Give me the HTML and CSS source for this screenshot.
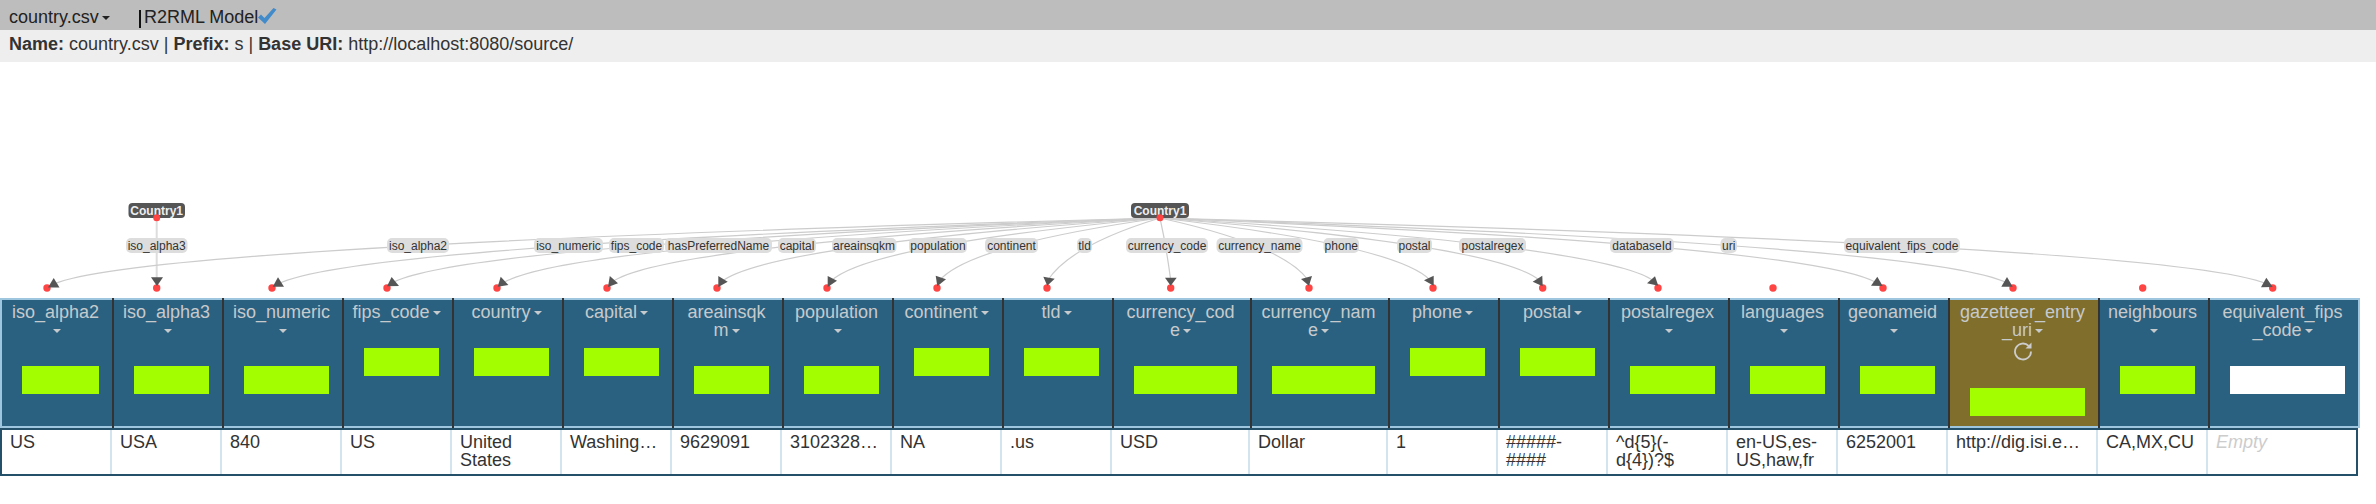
FILE: index.html
```html
<!DOCTYPE html>
<html lang="en">
<head>
  <meta charset="UTF-8" />
  <title>country.csv</title>
  <link rel="stylesheet" href="styles.css">
</head>
<body>

<div class="topbar">
  <span class="ws-name">country.csv<span class="caret"></span></span>
  <span class="model-sep"></span>
  <span class="model-name">R2RML Model</span>
  <svg class="check" width="19" height="16" viewBox="0 0 19 16"><path d="M0 9.5 L3 6.5 L6.5 10 L15.5 0 L18.5 1.5 L7 16 Z"/></svg>
</div>
<div class="infobar"><b>Name:</b> country.csv | <b>Prefix:</b> s | <b>Base URI:</b> http://localhost:8080/source/</div>

<!-- Graphe du modele, coordonnees = pixels de la page -->
<svg class="graph" width="2376" height="236" viewBox="0 62 2376 236">
  <line class="edge-main" x1="156.7" y1="218" x2="156.7" y2="280"/>
  <path class="edge" d="M1160 218 Q146 245 54 284"/>
  <path class="edge" d="M1160 218 Q355 245 278 284"/>
  <path class="edge" d="M1160 218 Q461 245 392 283"/>
  <path class="edge" d="M1160 218 Q564 245 503 283"/>
  <path class="edge" d="M1160 218 Q665 245 612 282"/>
  <path class="edge" d="M1160 218 Q767 245 721 282"/>
  <path class="edge" d="M1160 218 Q869 245 831 281"/>
  <path class="edge" d="M1160 218 Q969 245 939 281"/>
  <path class="edge" d="M1160 218 Q1071 245 1048 280"/>
  <path class="edge" d="M1160 218 Q1166 245 1170.7 280"/>
  <path class="edge" d="M1160 218 Q1283 245 1308 280"/>
  <path class="edge" d="M1160 218 Q1396 245 1430 280"/>
  <path class="edge" d="M1160 218 Q1497 245 1539 280"/>
  <path class="edge" d="M1160 218 Q1604 245 1654 281"/>
  <path class="edge" d="M1160 218 Q1812 245 1877 283"/>
  <path class="edge" d="M1160 218 Q1933 245 2007 283"/>
  <path class="edge" d="M1160 218 Q2175 245 2267 284"/>

  <g class="labels">
    <rect x="126" y="238" width="61.5" height="15" rx="5"/><text x="156.7" y="250">iso_alpha3</text>
    <rect x="387" y="238" width="62" height="15" rx="5"/><text x="418" y="250">iso_alpha2</text>
    <rect x="534" y="238" width="69" height="15" rx="5"/><text x="568.5" y="250">iso_numeric</text>
    <rect x="609" y="238" width="55" height="15" rx="5"/><text x="636.5" y="250">fips_code</text>
    <rect x="665" y="238" width="107" height="15" rx="5"/><text x="718.5" y="250">hasPreferredName</text>
    <rect x="778" y="238" width="38" height="15" rx="5"/><text x="797" y="250">capital</text>
    <rect x="832" y="238" width="64.5" height="15" rx="5"/><text x="864" y="250">areainsqkm</text>
    <rect x="909" y="238" width="58" height="15" rx="5"/><text x="938" y="250">population</text>
    <rect x="985" y="238" width="53" height="15" rx="5"/><text x="1011.5" y="250">continent</text>
    <rect x="1077" y="238" width="15" height="15" rx="5"/><text x="1084.5" y="250">tld</text>
    <rect x="1126" y="238" width="82" height="15" rx="5"/><text x="1167" y="250">currency_code</text>
    <rect x="1216.5" y="238" width="86" height="15" rx="5"/><text x="1259.5" y="250">currency_name</text>
    <rect x="1323.5" y="238" width="35.5" height="15" rx="5"/><text x="1341.3" y="250">phone</text>
    <rect x="1397" y="238" width="35" height="15" rx="5"/><text x="1414.5" y="250">postal</text>
    <rect x="1459" y="238" width="67" height="15" rx="5"/><text x="1492.5" y="250">postalregex</text>
    <rect x="1610" y="238" width="64" height="15" rx="5"/><text x="1642" y="250">databaseId</text>
    <rect x="1720.5" y="238" width="16.5" height="15" rx="5"/><text x="1728.7" y="250">uri</text>
    <rect x="1844" y="238" width="116" height="15" rx="5"/><text x="1902" y="250">equivalent_fips_code</text>
  </g>

  <g class="nodes">
    <rect x="128.5" y="203" width="56.5" height="15" rx="4"/><text x="156.7" y="215">Country1</text>
    <rect x="1131" y="203" width="58" height="15" rx="4"/><text x="1160" y="215">Country1</text>
  </g>

  <g class="dots">
    <circle cx="156.7" cy="217.7" r="3.5"/>
    <circle cx="1160" cy="217.7" r="3.5"/>
    <circle cx="47" cy="288" r="3.7"/>
    <circle cx="156.7" cy="288" r="3.7"/>
    <circle cx="272" cy="288" r="3.7"/>
    <circle cx="387" cy="288" r="3.7"/>
    <circle cx="497" cy="288" r="3.7"/>
    <circle cx="607" cy="288" r="3.7"/>
    <circle cx="717" cy="288" r="3.7"/>
    <circle cx="827" cy="288" r="3.7"/>
    <circle cx="937" cy="288" r="3.7"/>
    <circle cx="1047" cy="288" r="3.7"/>
    <circle cx="1170.7" cy="288" r="3.7"/>
    <circle cx="1309" cy="288" r="3.7"/>
    <circle cx="1433" cy="288" r="3.7"/>
    <circle cx="1542.7" cy="288" r="3.7"/>
    <circle cx="1658" cy="288" r="3.7"/>
    <circle cx="1773" cy="288" r="3.7"/>
    <circle cx="1883" cy="288" r="3.7"/>
    <circle cx="2013" cy="288" r="3.7"/>
    <circle cx="2142.7" cy="288" r="3.7"/>
    <circle cx="2272.7" cy="288" r="3.7"/>
  </g>

  <g class="arrows">
    <polygon points="53.7,278 48,287.5 59.5,287.5"/>
    <polygon points="151,277.3 163,277.3 157,286"/>
    <polygon points="278,277.3 272.7,286.7 284,286.7"/>
    <polygon points="391.6,277 387,286.3 399,286"/>
    <polygon points="500.7,276.7 508.4,285 497.7,286.7"/>
    <polygon points="609.8,276 618,283.3 608,287"/>
    <polygon points="718.3,276 727.7,281.7 718.3,287"/>
    <polygon points="827.7,276 837,280.7 827.7,287"/>
    <polygon points="935.7,275.7 946,279.3 937.3,286.3"/>
    <polygon points="1043.3,276.7 1054.7,278.7 1047.3,285.7"/>
    <polygon points="1165,277.7 1176.7,277.7 1170.7,285.7"/>
    <polygon points="1312,276 1309,285.7 1301,279"/>
    <polygon points="1433.7,275.7 1433.7,285.7 1424,280.3"/>
    <polygon points="1542.3,275.7 1542.7,286.3 1532.7,281.7"/>
    <polygon points="1655,276.3 1658.3,285.7 1647,283.3"/>
    <polygon points="1877.3,276.7 1882.7,286 1871,285.7"/>
    <polygon points="2007,277 2012.7,286.7 2001.3,286.7"/>
    <polygon points="2266.3,277.7 2272.7,287 2261,287.3"/>
  </g>
</svg>

<div class="head-row">
  <div class="col first"><div class="col-in"><div class="col-title">iso_alpha2<span class="caret"></span></div><div class="bar"></div></div></div>
  <div class="col"><div class="col-in"><div class="col-title">iso_alpha3<span class="caret"></span></div><div class="bar"></div></div></div>
  <div class="col"><div class="col-in"><div class="col-title">iso_numeric<span class="caret"></span></div><div class="bar"></div></div></div>
  <div class="col"><div class="col-in"><div class="col-title">fips_code<span class="caret"></span></div><div class="bar"></div></div></div>
  <div class="col"><div class="col-in"><div class="col-title">country<span class="caret"></span></div><div class="bar"></div></div></div>
  <div class="col"><div class="col-in"><div class="col-title">capital<span class="caret"></span></div><div class="bar"></div></div></div>
  <div class="col"><div class="col-in"><div class="col-title">areainsqk<br>m<span class="caret"></span></div><div class="bar"></div></div></div>
  <div class="col"><div class="col-in"><div class="col-title">population<span class="caret"></span></div><div class="bar"></div></div></div>
  <div class="col"><div class="col-in"><div class="col-title">continent<span class="caret"></span></div><div class="bar"></div></div></div>
  <div class="col"><div class="col-in"><div class="col-title">tld<span class="caret"></span></div><div class="bar"></div></div></div>
  <div class="col"><div class="col-in"><div class="col-title">currency_cod<br>e<span class="caret"></span></div><div class="bar"></div></div></div>
  <div class="col"><div class="col-in"><div class="col-title">currency_nam<br>e<span class="caret"></span></div><div class="bar"></div></div></div>
  <div class="col"><div class="col-in"><div class="col-title">phone<span class="caret"></span></div><div class="bar"></div></div></div>
  <div class="col"><div class="col-in"><div class="col-title">postal<span class="caret"></span></div><div class="bar"></div></div></div>
  <div class="col"><div class="col-in"><div class="col-title">postalregex<span class="caret"></span></div><div class="bar"></div></div></div>
  <div class="col"><div class="col-in"><div class="col-title">languages<span class="caret"></span></div><div class="bar"></div></div></div>
  <div class="col"><div class="col-in"><div class="col-title">geonameid<span class="caret"></span></div><div class="bar"></div></div></div>
  <div class="col selected"><div class="col-in">
    <div class="col-title">gazetteer_entry<br>_uri<span class="caret"></span></div>
    <svg class="refresh" width="19" height="22" viewBox="0 0 19 22"><path d="M14.66 6.84 A8 8 0 1 0 17 12.5"/><polygon points="17.5,3.5 17.5,9.5 11.5,9.5"/></svg>
    <div class="bar"></div>
  </div></div>
  <div class="col"><div class="col-in"><div class="col-title">neighbours<span class="caret"></span></div><div class="bar"></div></div></div>
  <div class="col last"><div class="col-in"><div class="col-title">equivalent_fips<br>_code<span class="caret"></span></div><div class="bar empty"></div></div></div>
</div>

<div class="value-row">
  <div class="val">US</div>
  <div class="val">USA</div>
  <div class="val">840</div>
  <div class="val">US</div>
  <div class="val">United States</div>
  <div class="val">Washing…</div>
  <div class="val">9629091</div>
  <div class="val">3102328…</div>
  <div class="val">NA</div>
  <div class="val">.us</div>
  <div class="val">USD</div>
  <div class="val">Dollar</div>
  <div class="val">1</div>
  <div class="val">#####-####</div>
  <div class="val">^d{5}(-<br>d{4})?$</div>
  <div class="val">en-US,es-US,haw,fr</div>
  <div class="val">6252001</div>
  <div class="val">http://dig.isi.e…</div>
  <div class="val">CA,MX,CU</div>
  <div class="val none">Empty</div>
</div>

</body>
</html>
```

FILE: styles.css
```css
body {
  font-family: "Liberation Sans", Arial, sans-serif;
  font-size: 18px;
  line-height: 18px;
  color: #333;
  background: #fff;
  margin: 0;
  padding: 0;
}

.topbar {
  display: flex;
  align-items: center;
  box-sizing: border-box;
  height: 30px;
  padding: 4px 0 0 9px;
  background: #bdbdbd;
  color: #222;
}

.ws-name {
  width: 130px;
}

.model-sep {
  width: 2px;
  height: 18px;
  margin-top: 3px;
  margin-right: 3px;
  background: #111;
}

.check {
  fill: #428bca;
  margin-top: -3px;
}

.infobar {
  height: 32px;
  line-height: 28px;
  padding-left: 9px;
  background: #eee;
}

.graph {
  display: block;
}

.edge {
  fill: none;
  stroke: #ccc;
  stroke-width: 1.2;
}

.edge-main {
  stroke: #ddd;
  stroke-width: 2;
}

.labels rect {
  fill: #ddd;
}

.labels text {
  font-size: 12px;
  fill: #333;
  text-anchor: middle;
}

.nodes rect {
  fill: #555;
}

.nodes text {
  font-size: 12px;
  font-weight: bold;
  fill: #eee;
  text-anchor: middle;
}

.dots circle {
  fill: #f44;
}

.arrows polygon {
  fill: #555;
}

.caret {
  display: inline-block;
  width: 0;
  height: 0;
  margin-left: 3px;
  vertical-align: middle;
  border-top: 4px solid currentColor;
  border-left: 4px solid transparent;
  border-right: 4px solid transparent;
}

.head-row {
  display: grid;
  grid-template-columns: 114px 110px 120px repeat(7, 110px) 138px 138px 110px 110px 120px 110px 110px 150px 110px 150px;
  width: 2360px;
  height: 130px;
}

.col {
  box-sizing: border-box;
  border-right: 2px solid #333;
  background: #2b6180;
  color: #c6cacc;
}

.col.first {
  border-left: 2px solid #9ec6de;
}

.col.last {
  border-right-color: #9ec6de;
}

.col-in {
  box-sizing: border-box;
  height: 100%;
  padding-top: 3px;
  border-top: 2px solid #9ec6de;
  border-bottom: 2px solid #9ec6de;
}

.col.selected .col-in {
  background: #7f6e2c;
}

.col-title {
  padding: 0 10px 0 7px;
  text-align: center;
  word-break: break-all;
}

.refresh {
  display: block;
  margin: 0 auto;
  transform: translateX(-1px);
}

.refresh path {
  fill: none;
  stroke: #ccc;
  stroke-width: 1.8;
}

.refresh polygon {
  fill: #ccc;
}

.bar {
  height: 28px;
  margin: 27px 13px 0 20px;
  background: #a3ff00;
}

.bar.empty {
  background: #fff;
}

.value-row {
  display: grid;
  grid-template-columns: 112px 110px 120px repeat(7, 110px) 138px 138px 110px 110px 120px 110px 110px 150px 110px 146px;
  box-sizing: border-box;
  width: 2358px;
  height: 48px;
  border: 2px solid #24506a;
}

.val {
  padding: 3px 6px;
  margin-right: 2px;
  border-right: 2px solid #d3e4ee;
  background: #fff;
}

.val:first-child {
  padding-left: 8px;
}

.val.none {
  border-right: none;
  color: #ccc;
  font-style: italic;
}
```
